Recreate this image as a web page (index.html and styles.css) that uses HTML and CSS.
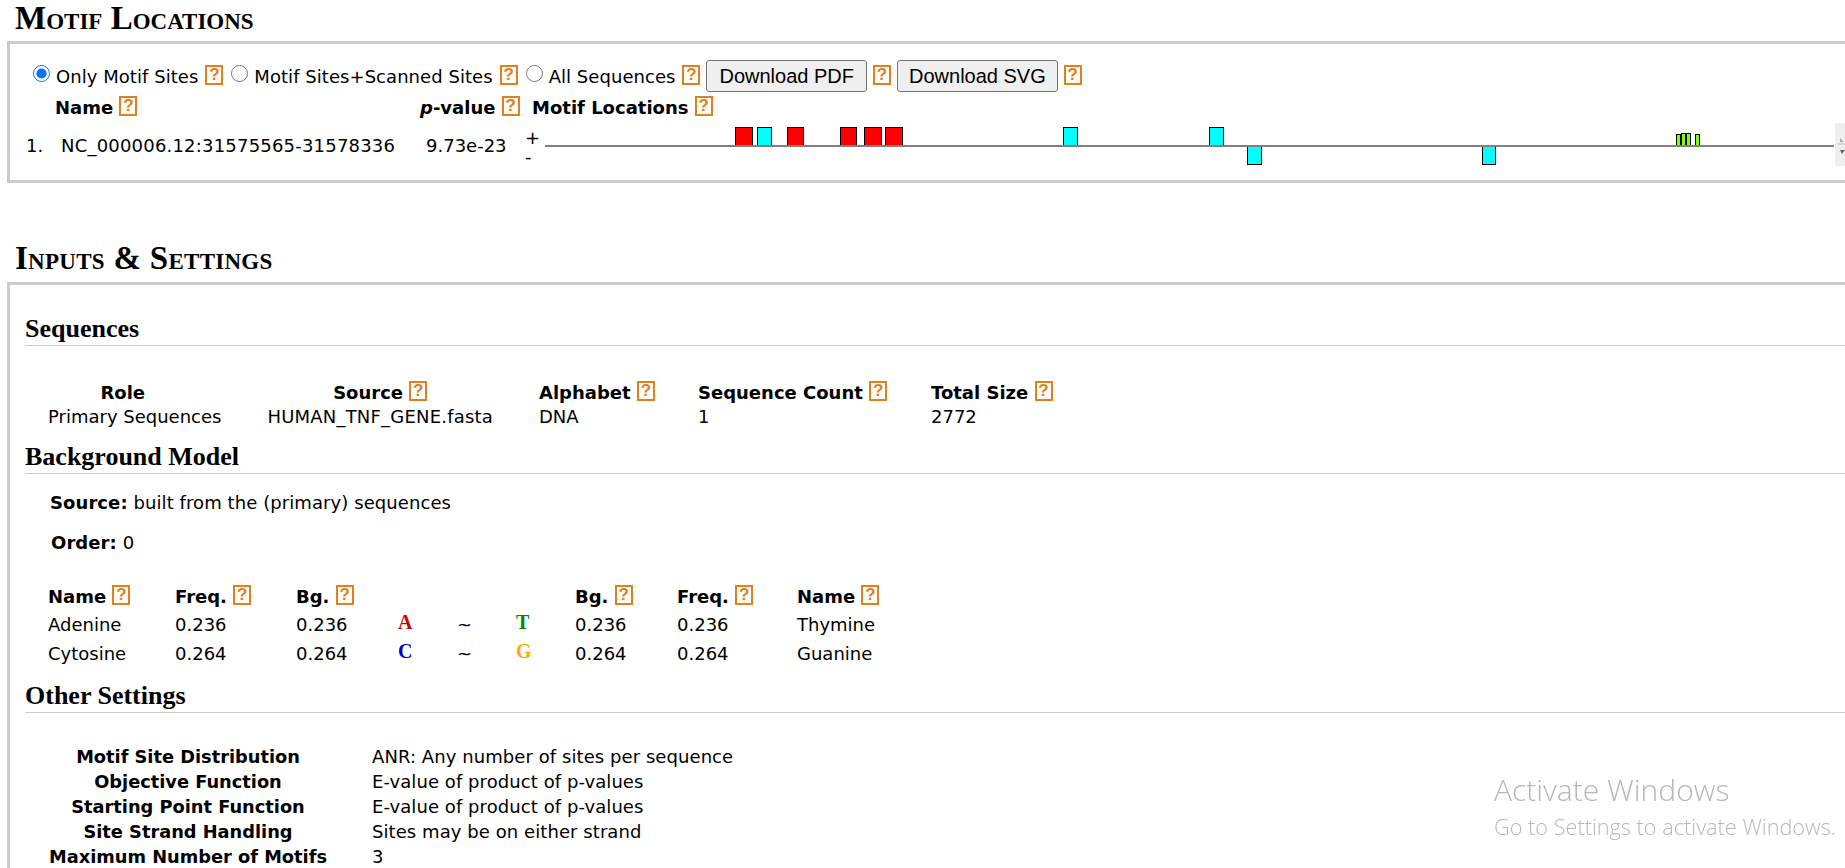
FILE: index.html
```html
<!DOCTYPE html>
<html>
<head>
  <title>Motif Locations</title>
  <link rel="stylesheet" href="styles.css">
</head>
<body>

  <h2 class="mainh first">Motif Locations</h2>
  <div class="box locations">
    <div class="controls">
      <label class="opt"><input type="radio" name="scan" checked><span>Only Motif Sites</span></label>
      <span class="help">?</span>
      <label class="opt"><input type="radio" name="scan"><span>Motif Sites+Scanned Sites</span></label>
      <span class="help">?</span>
      <label class="opt"><input type="radio" name="scan"><span>All Sequences</span></label>
      <span class="help">?</span>
      <button>Download PDF</button>
      <span class="help">?</span>
      <button class="btn-svg">Download SVG</button>
      <span class="help">?</span>
    </div>
    <div class="loc-head">
      <b class="col-name">Name <span class="help">?</span></b>
      <b class="col-pv"><i>p</i>-value <span class="help">?</span></b>
      <b>Motif Locations <span class="help">?</span></b>
    </div>
    <div class="loc-row">
      <span class="col-num">1.</span>
      <span class="col-seq">NC_000006.12:31575565-31578336</span>
      <span class="col-pval">9.73e-23</span>
      <span class="strands"><span>+</span><span>-</span></span>
      <svg class="track" width="1289" height="50" viewBox="545 120 1289 50">
        <g stroke="#000" stroke-width="1">
          <rect class="m1" x="735.5" y="127.5" width="17" height="18"/>
          <rect class="m2" x="757.5" y="127.5" width="14" height="18"/>
          <rect class="m1" x="787.5" y="127.5" width="16" height="18"/>
          <rect class="m1" x="840.5" y="127.5" width="16" height="18"/>
          <rect class="m1" x="864.5" y="127.5" width="17" height="18"/>
          <rect class="m1" x="885.5" y="127.5" width="17" height="18"/>
          <rect class="m2" x="1063.5" y="127.5" width="14" height="18"/>
          <rect class="m2" x="1209.5" y="127.5" width="14" height="18"/>
          <rect class="m2" x="1247.5" y="146.5" width="14" height="18"/>
          <rect class="m2" x="1482.5" y="146.5" width="13" height="18"/>
          <rect class="m3" x="1676.5" y="134.5" width="4" height="11"/>
          <rect class="m3" x="1681.5" y="133.5" width="4" height="12"/>
          <rect class="m3" x="1686.5" y="133.5" width="4" height="12"/>
          <rect class="m3" x="1695.5" y="134.5" width="4" height="11"/>
        </g>
        <rect x="545" y="145" width="1289" height="2" fill="#808080"/>
      </svg>
      <div class="spinner">
        <svg width="10" height="43" viewBox="0 0 10 43">
          <path d="M5 15l4 4H5z" fill="#aaa"/>
          <path d="M2 21h8" stroke="#bbb"/>
          <path d="M5 27h5l-3 4z" fill="#666"/>
        </svg>
      </div>
    </div>
  </div>

  <h2 class="mainh second">Inputs &amp; Settings</h2>
  <div class="box settings">
    <h4 class="subh">Sequences</h4>
    <table class="data seqs">
      <tr>
        <th class="c-role">Role</th>
        <th class="c-source">Source <span class="help">?</span></th>
        <th class="c-alpha left">Alphabet <span class="help">?</span></th>
        <th class="c-count left">Sequence Count <span class="help">?</span></th>
        <th class="left">Total Size <span class="help">?</span></th>
      </tr>
      <tr>
        <td class="mid">Primary Sequences</td>
        <td class="mid fasta">HUMAN_TNF_GENE.fasta</td>
        <td>DNA</td>
        <td>1</td>
        <td>2772</td>
      </tr>
    </table>

    <h4 class="subh bg">Background Model</h4>
    <p class="kv src"><b>Source:</b> built from the (primary) sequences</p>
    <p class="kv ord"><b>Order:</b> 0</p>
    <table class="data bases">
      <tr>
        <th class="left b-name">Name <span class="help">?</span></th>
        <th class="left b-freq">Freq. <span class="help">?</span></th>
        <th class="left b-bg">Bg. <span class="help">?</span></th>
        <th class="b-sym"></th>
        <th class="b-sym"></th>
        <th class="b-sym"></th>
        <th class="left b-bg2">Bg. <span class="help">?</span></th>
        <th class="left b-freq2">Freq. <span class="help">?</span></th>
        <th class="left">Name <span class="help">?</span></th>
      </tr>
      <tr>
        <td>Adenine</td><td>0.236</td><td>0.236</td>
        <td><span class="base a">A</span></td><td class="tilde">~</td><td><span class="base t">T</span></td>
        <td>0.236</td><td>0.236</td><td>Thymine</td>
      </tr>
      <tr>
        <td>Cytosine</td><td>0.264</td><td>0.264</td>
        <td><span class="base c">C</span></td><td class="tilde">~</td><td><span class="base g">G</span></td>
        <td>0.264</td><td>0.264</td><td>Guanine</td>
      </tr>
    </table>

    <h4 class="subh other">Other Settings</h4>
    <table class="data opts">
      <tr><th>Motif Site Distribution</th><td>ANR: Any number of sites per sequence</td></tr>
      <tr><th>Objective Function</th><td>E-value of product of p-values</td></tr>
      <tr><th>Starting Point Function</th><td>E-value of product of p-values</td></tr>
      <tr><th>Site Strand Handling</th><td>Sites may be on either strand</td></tr>
      <tr><th>Maximum Number of Motifs</th><td>3</td></tr>
    </table>
  </div>

  <div class="activate">
    <div class="act-title">Activate Windows</div>
    <div class="act-sub">Go to Settings to activate Windows.</div>
  </div>

</body>
</html>
```

FILE: styles.css
```css
html, body {
  height: 868px;
  overflow: hidden;
}

body {
  font-family: "DejaVu Sans", Verdana, sans-serif;
  font-size: 18px;
  color: #000;
  background-color: #fff;
  margin: 0;
  padding: 0;
}

.mainh {
  font-family: "Liberation Serif", "Times New Roman", serif;
  font-variant: small-caps;
  font-size: 33px;
  line-height: 32px;
  font-weight: bold;
  margin: 0 0 0 15px;
}

.first {
  padding-top: 2px;
  margin-bottom: 7px;
}

.second {
  margin-top: 59px;
  margin-bottom: 8px;
  letter-spacing: 0.28px;
}

.box {
  border: 3px solid #ccc;
  margin: 0 -20px 0 7px;
}

.locations {
  height: 136px;
  padding-left: 23px;
}

.settings {
  height: 700px;
  padding-left: 15px;
}

.help {
  display: inline-block;
  box-sizing: border-box;
  width: 18px;
  height: 20px;
  border: 2px solid #e0801e;
  background-color: #fffdf8;
  color: #e0801e;
  font-family: "Liberation Sans", Arial, sans-serif;
  font-size: 17px;
  font-weight: bold;
  line-height: 16px;
  text-align: center;
  vertical-align: 3px;
}

.controls {
  display: flex;
  align-items: center;
  height: 32px;
  margin-top: 16px;
  gap: 6px;
}

.controls .help {
  margin-bottom: 3px;
}

.opt {
  display: flex;
  align-items: center;
  letter-spacing: 0.05px;
}

.opt + .help {
  margin-left: 1px;
}

.help + .opt {
  margin-left: 2px;
}

.opt input {
  width: 17px;
  height: 17px;
  margin: 0 6px 5px 0;
}

button {
  font-family: "Liberation Sans", Arial, sans-serif;
  font-size: 20px;
  height: 32px;
  padding: 0 12px;
  background-color: #efefef;
  border: 1px solid #767676;
  border-radius: 3px;
  color: #000;
}

.btn-svg {
  padding: 0 11px;
}

.loc-head {
  display: flex;
  margin-top: 4px;
  padding-left: 22px;
  line-height: 24px;
}

.col-name {
  width: 365px;
}

.col-pv {
  width: 112px;
}

.loc-row {
  display: flex;
  align-items: flex-start;
  margin-left: -7px;
}

.col-num {
  width: 35px;
  padding-top: 15px;
}

.col-seq {
  width: 365px;
  padding-top: 15px;
  letter-spacing: 0.2px;
  white-space: nowrap;
}

.col-pval {
  width: 99px;
  padding-top: 15px;
}

.strands {
  display: flex;
  flex-direction: column;
  width: 20px;
  line-height: 19px;
  padding-top: 8px;
}

.track {
  display: block;
}

.spinner {
  width: 10px;
  height: 43px;
  margin-top: 3px;
  margin-left: 1px;
  background-color: #efefef;
}

.spinner svg {
  display: block;
}

.m1 { fill: #f00; }
.m2 { fill: #0ff; }
.m3 { fill: #7fff00; }

.subh {
  font-family: "Liberation Serif", "Times New Roman", serif;
  font-size: 26px;
  line-height: 28px;
  font-weight: bold;
  margin: 0;
  padding-bottom: 2px;
  border-bottom: 1px solid #ccc;
}

.settings > .subh:first-child {
  margin-top: 30px;
}

.data {
  border-collapse: collapse;
}

.data th,
.data td {
  padding: 0;
  font-size: 18px;
  white-space: nowrap;
}

.left {
  text-align: left;
}

.mid {
  text-align: center;
}

.seqs {
  margin-top: 34px;
  margin-left: 23px;
}

.seqs th {
  height: 24px;
}

.seqs td {
  height: 24px;
}

.c-role {
  width: 148px;
  padding-right: 70px !important;
}

.c-source {
  width: 224px;
  padding-right: 46px !important;
}

.seqs td.mid {
  padding-right: 46px;
}

.seqs td.fasta {
  letter-spacing: 0.2px;
}

.c-alpha { width: 159px; }
.c-count { width: 233px; }

.bg {
  margin-top: 15px;
}

.kv {
  margin: 0;
  line-height: 20px;
  letter-spacing: 0.08px;
}

.src {
  margin-top: 19px;
  padding-left: 25px;
}

.ord {
  margin-top: 20px;
  padding-left: 26px;
}

.bases {
  margin-top: 28px;
  margin-left: 23px;
}

.bases th {
  height: 29px;
}

.bases td {
  height: 29px;
}

.b-name { width: 127px; }
.b-freq { width: 121px; }
.b-bg { width: 102px; }
.b-sym { width: 59px; }
.b-bg2 { width: 102px; }
.b-freq2 { width: 120px; }

.base {
  font-family: "Liberation Serif", "Times New Roman", serif;
  font-size: 20px;
  font-weight: bold;
  position: relative;
  top: -2px;
}

.a { color: #c00; }
.c { color: #00c; }
.g { color: #fa0; }
.t { color: #080; }

.other {
  margin-top: 14px;
}

.opts {
  margin-top: 31px;
  margin-left: 23px;
}

.opts th {
  width: 280px;
  height: 25px;
  text-align: center;
  font-size: 17.8px;
}

.opts td {
  padding-left: 44px;
  letter-spacing: 0.07px;
}

.activate {
  position: fixed;
  left: 1494px;
  top: 770px;
  color: #b8b8b8;
  font-family: "Open Sans", sans-serif;
  font-weight: 300;
}

.act-title {
  font-size: 30px;
  line-height: 40px;
}

.act-sub {
  font-size: 21.7px;
  line-height: 33px;
}
```
